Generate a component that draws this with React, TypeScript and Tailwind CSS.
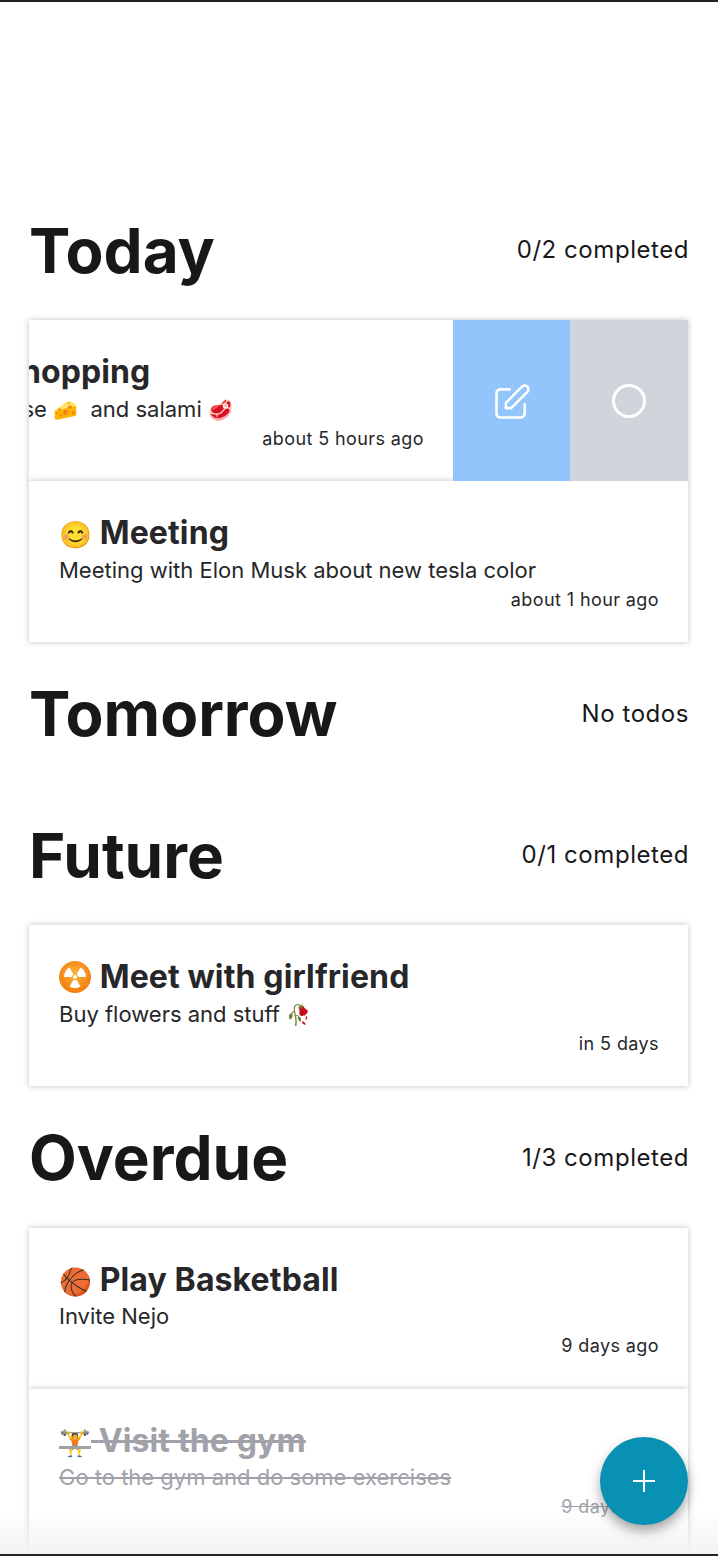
import type { ReactNode } from "react";

function Header({ title, note }: { title: string; note: string }) {
  return (
    <div className="flex h-[141.5px] items-center justify-between">
      <h1 className="pt-[3px] text-[62px] font-bold leading-none text-[#18181b]">{title}</h1>
      <span className="mr-[-1px] pt-[2px] text-[24px] tracking-[0.55px] text-[#18181b]">{note}</span>
    </div>
  );
}

function CardText({ emoji, title, body, date, done }: { emoji: ReactNode; title: string; body: ReactNode; date: string; done?: boolean }) {
  return (
    <div className={done ? "text-[#a1a1aa] line-through" : "text-[#27272a]"}>
      <div className="h-[41.5px] text-[32px] font-bold leading-[40px] tracking-[0.12px] whitespace-nowrap">
        <span className="text-[26.5px] tracking-normal">{emoji}</span> {title}
      </div>
      <div className="h-[30px] text-[22px] leading-[30px] whitespace-nowrap">{body}</div>
      <div className="mt-[2px] h-[26px] text-right text-[18px] tracking-[0.4px] leading-[26px]">{date}</div>
    </div>
  );
}

function Card(props: { emoji: ReactNode; title: string; body: ReactNode; date: string; done?: boolean }) {
  return (
    <div className="h-[161px] bg-white pl-[30px] pr-[29px] pt-[32px] shadow-[0_0_6px_rgba(0,0,0,0.25)]">
      <CardText {...props} />
    </div>
  );
}

const E = ({ c }: { c: string }) => <span className="text-[20px]">{c}</span>;

function Radioactive() {
  return (
    <svg role="img" aria-label="☢️" width="32" height="32" viewBox="0 0 32 32" className="mr-[1px] inline-block align-[-5px]">
      <defs>
        <radialGradient id="rad" cx="50%" cy="40%" r="60%">
          <stop offset="0%" stopColor="#ffb13b" />
          <stop offset="100%" stopColor="#f27d0c" />
        </radialGradient>
      </defs>
      <circle cx="16" cy="16" r="16" fill="url(#rad)" />
      <g fill="#fff">
        <path d="M19.5 16L27 16A11 11 0 0 0 21.5 6.47L17.75 12.97Z" />
        <path d="M14.25 12.97L10.5 6.47A11 11 0 0 0 5 16L12.5 16Z" />
        <path d="M14.25 19.03L10.5 25.53A11 11 0 0 0 21.5 25.53L17.75 19.03Z" />
        <circle cx="16" cy="16" r="2" />
      </g>
    </svg>
  );
}

function SwipedCard() {
  return (
    <div className="flex h-[161px] overflow-hidden bg-white shadow-[0_0_6px_rgba(0,0,0,0.25)]">
      <div className="ml-[-235px] w-full shrink-0 pl-[30px] pr-[29px] pt-[32px]">
        <CardText
          emoji="🛒"
          title="Grocery Shopping"
          body={<>Buy some old cheese <E c="🧀" />&nbsp; and salami <E c="🥩" /></>}
          date="about 5 hours ago"
        />
      </div>
      <div className="flex w-[117px] shrink-0 items-center justify-center bg-[#93c5fd] pt-[3px]">
        <svg width="45" height="45" viewBox="0 0 24 24" fill="none" stroke="#fff" strokeWidth="1.35" strokeLinecap="round" strokeLinejoin="round">
          <path d="M11 5H6a2 2 0 0 0-2 2v11a2 2 0 0 0 2 2h11a2 2 0 0 0 2-2v-5m-1.414-9.414a2 2 0 1 1 2.828 2.828L11.828 15H9v-2.828l8.586-8.586z" />
        </svg>
      </div>
      <div className="flex w-[118px] shrink-0 items-center justify-center bg-[#d1d5db]">
        <svg width="36" height="36" viewBox="0 0 36 36" fill="none" stroke="#fff" strokeWidth="3">
          <circle cx="18" cy="18" r="15.5" />
        </svg>
      </div>
    </div>
  );
}

export default function App() {
  return (
    <div className="relative h-[1556px] overflow-hidden bg-white font-['Inter',sans-serif]">
      <div className="h-[2px] bg-[#222222]" />
      <main className="pl-[29px] pr-[30px] pt-[176.5px]">
        <Header title="Today" note="0/2 completed" />
        <SwipedCard />
        <Card emoji="😊" title="Meeting" body="Meeting with Elon Musk about new tesla color" date="about 1 hour ago" />
        <Header title="Tomorrow" note="No todos" />
        <Header title="Future" note="0/1 completed" />
        <Card emoji={<Radioactive />} title="Meet with girlfriend" body={<>Buy flowers and stuff <E c="🥀" /></>} date="in 5 days" />
        <Header title="Overdue" note="1/3 completed" />
        <Card emoji="🏀" title="Play Basketball" body="Invite Nejo" date="9 days ago" />
        <Card emoji={<span className="text-[25.5px]">🏋️</span>} title="Visit the gym" body="Go to the gym and do some exercises" date="9 days ago" done />
        <Card emoji="📚" title="Read a book" body="Finish the book" date="9 days ago" />
      </main>
      <div className="pointer-events-none absolute bottom-[2px] left-0 right-0 h-[44px] bg-gradient-to-b from-transparent to-[#f3f3f3]" />
      <button className="absolute left-[600px] top-[1437px] flex h-[88px] w-[88px] items-center justify-center rounded-full bg-[#0891b2] shadow-[0_6px_12px_rgba(0,0,0,0.35)]">
        <svg width="24" height="24" viewBox="0 0 24 24" stroke="#fff" strokeWidth="2"><path d="M12 1v22M1 12h22" /></svg>
      </button>
      <div className="absolute bottom-0 left-0 right-0 h-[2px] bg-[#222222]" />
    </div>
  );
}
